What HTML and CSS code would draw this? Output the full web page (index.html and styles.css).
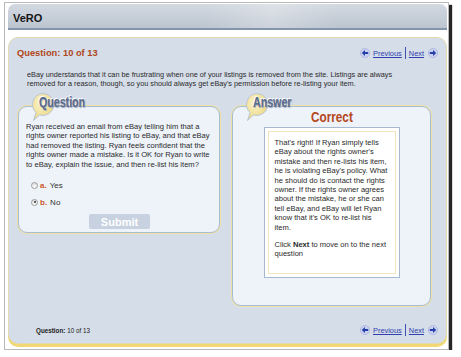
FILE: index.html
```html
<!DOCTYPE html>
<html lang="en">
<head>
    <meta charset="UTF-8">
    <title>VeRO - Quiz</title>
    <link rel="stylesheet" href="styles.css">
</head>
<body>
    <div class="window">
        <div class="title-bar">VeRO</div>

        <div class="panel">
            <div class="panel-top">
                <span class="question-count">Question: 10 of 13</span>
                <div class="pager">
                    <svg class="arrow" viewBox="0 0 10 10"><circle cx="5" cy="5" r="4.6"/><path d="M1.8 5 L5 2.1 L5 3.9 L8.2 3.9 L8.2 6.1 L5 6.1 L5 7.9 Z"/></svg>
                    <a href="#">Previous</a>
                    <span class="pager-sep"></span>
                    <a href="#">Next</a>
                    <svg class="arrow" viewBox="0 0 10 10"><circle cx="5" cy="5" r="4.6"/><path d="M8.2 5 L5 2.1 L5 3.9 L1.8 3.9 L1.8 6.1 L5 6.1 L5 7.9 Z"/></svg>
                </div>
            </div>

            <p class="intro">eBay understands that it can be frustrating when one of your listings is removed from the site. Listings are always removed for a reason, though, so you should always get eBay's permission before re-listing your item.</p>

            <div class="columns">
                <div class="box question-box">
                    <div class="bubble">
                        <svg viewBox="0 0 26 30"><defs><radialGradient id="bq" cx="0.4" cy="0.35" r="0.7"><stop offset="0" stop-color="#fbf5cf"/><stop offset="1" stop-color="#ead47a"/></radialGradient></defs><path d="M13 1.5 A11 11 0 1 1 9.5 23 L3.5 28.5 L6 20.5 A11 11 0 0 1 13 1.5 Z" fill="url(#bq)" stroke="#b8c7da" stroke-width="1"/></svg>
                        <span class="bubble-label">Question</span>
                    </div>
                    <p class="question-text">Ryan received an email from eBay telling him that a rights owner reported his listing to eBay, and that eBay had removed the listing. Ryan feels confident that the rights owner made a mistake. Is it OK for Ryan to write to eBay, explain the issue, and then re-list his item?</p>
                    <div class="option first">
                        <span class="radio"></span>
                        <span class="option-key">a.</span>
                        <span class="option-label">Yes</span>
                    </div>
                    <div class="option">
                        <span class="radio checked"></span>
                        <span class="option-key">b.</span>
                        <span class="option-label">No</span>
                    </div>
                    <button class="submit-btn" disabled>Submit</button>
                </div>

                <div class="box answer-box">
                    <div class="bubble">
                        <svg viewBox="0 0 26 30"><defs><radialGradient id="ba" cx="0.4" cy="0.35" r="0.7"><stop offset="0" stop-color="#fbf5cf"/><stop offset="1" stop-color="#ead47a"/></radialGradient></defs><path d="M13 1.5 A11 11 0 1 1 9.5 23 L3.5 28.5 L6 20.5 A11 11 0 0 1 13 1.5 Z" fill="url(#ba)" stroke="#b8c7da" stroke-width="1"/></svg>
                        <span class="bubble-label">Answer</span>
                    </div>
                    <div class="result"><span>Correct</span></div>
                    <div class="feedback">
                        <div class="feedback-inner">
                            <p>That's right! If Ryan simply tells eBay about the rights owner's mistake and then re-lists his item, he is violating eBay's policy. What he should do is contact the rights owner. If the rights owner agrees about the mistake, he or she can tell eBay, and eBay will let Ryan know that it's OK to re-list his item.</p>
                            <p>Click <b>Next</b> to move on to the next question</p>
                        </div>
                    </div>
                </div>
            </div>

            <div class="panel-bottom">
                <span class="footer-count"><b>Question:</b> 10 of 13</span>
                <div class="pager">
                    <svg class="arrow" viewBox="0 0 10 10"><circle cx="5" cy="5" r="4.6"/><path d="M1.8 5 L5 2.1 L5 3.9 L8.2 3.9 L8.2 6.1 L5 6.1 L5 7.9 Z"/></svg>
                    <a href="#">Previous</a>
                    <span class="pager-sep"></span>
                    <a href="#">Next</a>
                    <svg class="arrow" viewBox="0 0 10 10"><circle cx="5" cy="5" r="4.6"/><path d="M8.2 5 L5 2.1 L5 3.9 L1.8 3.9 L1.8 6.1 L5 6.1 L5 7.9 Z"/></svg>
                </div>
            </div>
        </div>
    </div>
</body>
</html>
```

FILE: styles.css
```css
body {
    margin: 0;
    background-color: #fff;
    font-family: "Liberation Sans", Arial, sans-serif;
    color: #222;
}

.window {
    box-sizing: border-box;
    width: 445px;
    height: 348px;
    margin: 2px 0 0 4px;
    padding: 1px 1px 0 3px;
    background-color: #fff;
    border: 1px solid #b9b9b9;
    box-shadow: 3px 3px 1px rgba(0, 0, 0, 0.85);
}

.title-bar {
    height: 20px;
    padding: 4px 0 0 5px;
    line-height: 20px;
    font-size: 11px;
    font-weight: bold;
    color: #151515;
    border-radius: 7px 7px 0 0;
    border-bottom: 2px solid #8595ab;
    background: linear-gradient(100deg, rgba(255, 255, 255, 0) 45%, rgba(255, 255, 255, 0.25) 60%, rgba(255, 255, 255, 0) 75%),
                linear-gradient(to bottom, #d3d9e1, #bcc5d0);
}

.panel {
    box-sizing: border-box;
    display: flex;
    flex-direction: column;
    height: 307px;
    margin-top: 7px;
    padding: 9px 8px 7px 8px;
    background-color: #d5dde8;
    border: 1px solid #e2dab0;
    border-radius: 10px;
    box-shadow: 0 3px 0 #f1d874;
}

.panel-top,
.panel-bottom {
    display: flex;
    justify-content: space-between;
    align-items: center;
    height: 12px;
}

.question-count {
    font-size: 9.3px;
    font-weight: bold;
    color: #b0461b;
}

.pager {
    display: flex;
    align-items: center;
    gap: 3px;
    font-size: 7.4px;
}

.pager a {
    color: #3040ae;
}

.pager-sep {
    width: 1px;
    height: 12px;
    background-color: #3e50b2;
}

.pager a + .arrow {
    margin-left: 1px;
}

.arrow {
    width: 10px;
    height: 10px;
}

.arrow circle {
    fill: #cad0f0;
    stroke: #a3abdc;
    stroke-width: 0.6;
}

.arrow path {
    fill: #2440a8;
}

.intro {
    width: 392px;
    margin: 10.5px 0 0 10px;
    font-size: 7.3px;
    line-height: 9px;
    color: #2a2a2a;
}

.columns {
    display: flex;
    align-items: flex-start;
    gap: 12px;
    margin-top: 18.5px;
    padding-left: 1px;
}

.box {
    position: relative;
    box-sizing: border-box;
    background-color: #eef3fa;
    border: 1px solid #a8bcd3;
    border-radius: 9px;
    box-shadow: 0 0 0 1px #eee1a4;
}

.bubble {
    position: absolute;
    top: -15px;
    left: 11px;
    display: flex;
    align-items: flex-start;
}

.bubble svg {
    width: 26px;
    height: 30px;
}

/* condensed heading face: stretch the bold sans horizontally */
.bubble-label {
    margin: 3px 0 0 -17px;
    font-size: 14px;
    font-weight: bold;
    line-height: 15px;
    color: #5a6a8c;
    text-shadow: 1px 1px 1px #9aa6b8, -1px -1px 0 #fff;
    transform: scaleX(0.76);
    transform-origin: left center;
}

.question-box {
    width: 202px;
    height: 127px;
    padding: 15px 6px 0 7px;
}

.question-text {
    margin: 0;
    font-size: 7.6px;
    line-height: 9.4px;
    color: #2a2a2a;
}

.option {
    display: flex;
    align-items: center;
    height: 12px;
    margin-top: 5px;
    padding-left: 5px;
    font-size: 8px;
    color: #333;
}

.option.first {
    margin-top: 10px;
}

.option-key {
    font-weight: bold;
    color: #c9562b;
}

.option-label {
    margin-left: 3px;
}

.radio {
    position: relative;
    box-sizing: border-box;
    width: 7px;
    height: 7px;
    margin-right: 2px;
    border: 1px solid #9a9a9a;
    border-radius: 50%;
    background: linear-gradient(#dcdcdc, #fff);
}

.radio.checked::after {
    content: "";
    position: absolute;
    top: 1.5px;
    left: 1.5px;
    width: 2px;
    height: 2px;
    border-radius: 50%;
    background-color: #333;
}

.submit-btn {
    display: block;
    width: 61px;
    height: 15px;
    margin: 6px auto 0;
    padding: 0;
    border: none;
    border-radius: 2px;
    background-color: #c7d1df;
    color: #fff;
    font-family: "Liberation Sans", Arial, sans-serif;
    font-size: 11px;
    font-weight: bold;
}

.answer-box {
    width: 199px;
    height: 200px;
    padding-top: 3px;
}

.result {
    text-align: center;
    font-size: 14px;
    font-weight: bold;
    line-height: 14px;
    color: #b4481c;
}

.result span {
    display: inline-block;
    transform: scaleX(0.84);
}

.feedback {
    box-sizing: border-box;
    width: 136px;
    margin: 3px auto 0;
    padding: 3px;
    background-color: #fff;
    border: 1px solid #a5b8d0;
}

.feedback-inner {
    padding: 6px 7px 15px 6px;
    border: 1px solid #efe6bb;
    font-size: 7.55px;
    line-height: 9.4px;
    color: #2a2a2a;
}

.feedback-inner p {
    margin: 0;
}

.feedback-inner p + p {
    margin-top: 7.5px;
}

.panel-bottom {
    margin-top: auto;
}

.footer-count {
    padding-left: 19px;
    font-size: 6.3px;
    color: #222;
}
```
